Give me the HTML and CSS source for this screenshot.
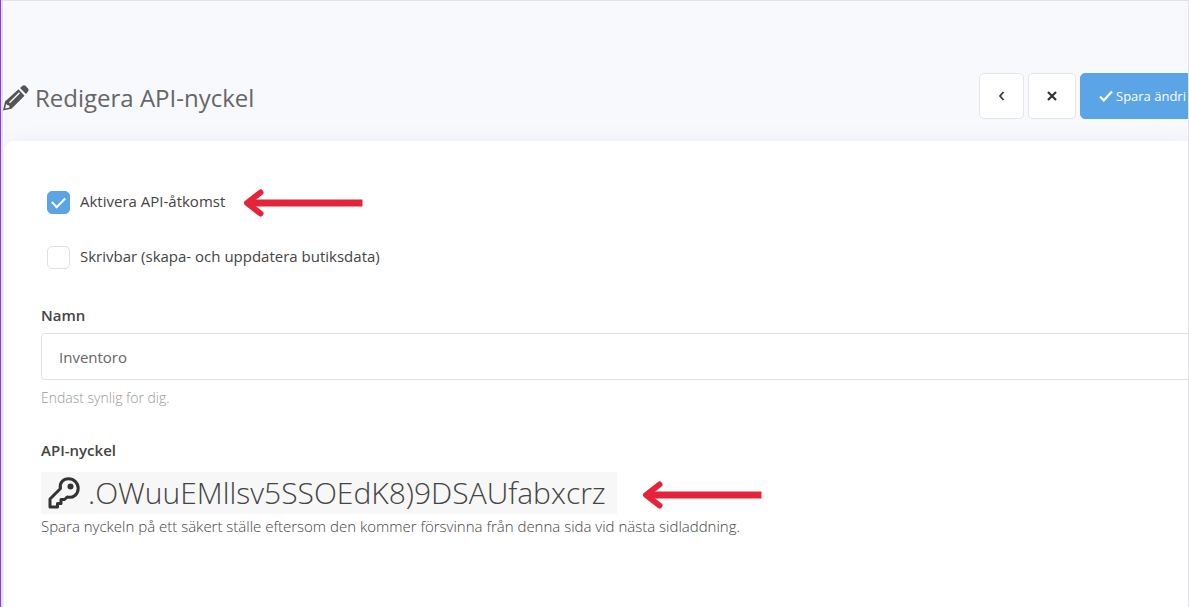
FILE: index.html
```html
<!DOCTYPE html>
<html lang="sv">
<head>
<meta charset="utf-8">
<title>Redigera API-nyckel</title>
<link rel="stylesheet" href="styles.css">
</head>
<body>
<div class="frame">
  <header class="page-header">
    <h1 class="title">
      <svg class="title-icon" viewBox="0 0 26 26" aria-hidden="true">
        <path fill="#555" fill-rule="evenodd" d="M0 25.5 2 16.5 15.5 4.2 21.5 10.700 8.500 23.700ZM2.200 23.600 6.500 22.600 6.200 20.500 4 20 3.200 18.500ZM6 17.200 7 18.200 17 8.200 16 7.200Z"/>
        <path fill="#555" d="m17 3 2.500-2.200q1.500-1.200 3 0L25 3.500q1.200 1.500 0 3L23 9Z"/>
      </svg>
      <span>Redigera API-nyckel</span>
    </h1>
    <div class="actions">
      <button class="btn btn-back" type="button" aria-label="Tillbaka">
        <svg class="btn-icon" viewBox="0 0 12 12" aria-hidden="true"><path d="M7.500 2 4 6l3.500 4" fill="none" stroke="#333" stroke-width="1.700"/></svg>
      </button>
      <button class="btn btn-close" type="button" aria-label="Stäng">
        <svg class="btn-icon" viewBox="0 0 12 12" aria-hidden="true"><path d="m2 2 8 8M10 2l-8 8" fill="none" stroke="#333" stroke-width="2.200"/></svg>
      </button>
      <button class="btn btn-save" type="button">
        <svg class="save-icon" viewBox="0 0 14 12" aria-hidden="true"><path d="m1 6.500 3.800 3.800L13 1.500" fill="none" stroke="#fff" stroke-width="2.200"/></svg>
        <span>Spara ändri</span>
      </button>
    </div>
  </header>
  <main class="card">
    <div class="check-row">
      <input class="check" type="checkbox" id="active" checked>
      <label class="check-label" for="active">Aktivera API-åtkomst</label>
      <svg class="arrow" viewBox="0 0 120 28" aria-hidden="true"><path d="M5 14h114.500" fill="none" stroke="#e5243b" stroke-width="7"/><path d="M17.500 3.500 4 14l13.500 10.500" fill="none" stroke="#e5243b" stroke-width="6" stroke-linecap="round" stroke-linejoin="round"/></svg>
    </div>
    <div class="check-row">
      <input class="check" type="checkbox" id="writable">
      <label class="check-label" for="writable">Skrivbar (skapa- och uppdatera butiksdata)</label>
    </div>
    <div class="field">
      <label class="field-label" for="name">Namn</label>
      <input class="text-input" type="text" id="name" value="Inventoro">
      <p class="hint">Endast synlig for dig.</p>
    </div>
    <section class="key-section">
      <h2 class="field-label">API-nyckel</h2>
      <div class="key-row">
        <div class="key">
          <svg class="key-icon" viewBox="0 0 32 32" aria-hidden="true">
            <path d="M2 30v-8l10.500-10.500C11 6 15.500 1.800 20.500 1.800c5.500 0 9.700 4.200 9.700 9.500 0 6-5 10.200-11 8.700L16.500 22.500H13v4H9.500V30Z" fill="none" stroke="#333" stroke-width="3" stroke-linejoin="round"/>
            <circle cx="22.500" cy="9.500" r="3" fill="#333"/>
          </svg>
          <code class="key-text">.OWuuEMllsv5SSOEdK8)9DSAUfabxcrz</code>
        </div>
        <svg class="arrow" viewBox="0 0 120 28" aria-hidden="true"><path d="M5 14h114.500" fill="none" stroke="#e5243b" stroke-width="7"/><path d="M17.500 3.500 4 14l13.500 10.500" fill="none" stroke="#e5243b" stroke-width="6" stroke-linecap="round" stroke-linejoin="round"/></svg>
      </div>
      <p class="key-note">Spara nyckeln på ett säkert ställe eftersom den kommer försvinna från denna sida vid nästa sidladdning.</p>
    </section>
  </main>
</div>
</body>
</html>
```
FILE: styles.css
```css
* { box-sizing: border-box; }

body {
  margin: 0;
  background: #f8f9fd;
  border-left: 1px solid #9035ff;
  font-family: "Open Sans", "Noto Sans", sans-serif;
  font-size: 15px;
  line-height: 20px;
  color: #444;
}

.frame {
  display: flex;
  flex-direction: column;
  min-height: 100vh;
  overflow: hidden;
  border: 1px solid #e3e4ea;
  border-bottom: 0;
  border-left-width: 2px;
}

.page-header {
  display: flex;
  align-items: center;
  justify-content: space-between;
  margin-right: -12px;
  padding-top: 72px;
  padding-bottom: 22px;
}

.title {
  display: flex;
  align-items: center;
  gap: 6px;
  margin: 0;
  padding-top: 4px;
  font-size: 24px;
  font-weight: 400;
  line-height: 32px;
  color: #666;
}

.title-icon { width: 26px; height: 26px; }

.actions { display: flex; gap: 4px; }

.btn {
  display: flex;
  align-items: center;
  justify-content: center;
  height: 46px;
  padding: 0;
  border: 1px solid #e5e6e9;
  border-radius: 5px;
  background: #fff;
  font-family: inherit;
  font-size: 13px;
}

.btn-back { width: 45px; }
.btn-close { width: 48px; }
.btn-icon { width: 12px; height: 12px; }

.btn-save {
  gap: 3px;
  width: 120px;
  justify-content: flex-start;
  padding-left: 18px;
  border-color: #5ba4e6;
  background: #5ba4e6;
  color: #fff;
  white-space: nowrap;
}

.save-icon { width: 14px; height: 12px; }

.card {
  flex: 1;
  margin-left: 1px;
  padding: 47px 0 48px 37px;
  border-top-left-radius: 9px;
  background: #fff;
  box-shadow: 0 0 20px rgba(40, 50, 80, 0.06);
}

.check-row {
  display: flex;
  align-items: center;
  gap: 10px;
  height: 28px;
  margin-bottom: 27px;
  padding-left: 6px;
}

.check {
  appearance: none;
  display: grid;
  place-items: center;
  width: 23px;
  height: 23px;
  margin: 0;
  border: 1px solid #dedfe1;
  border-radius: 5px;
  background: #fff;
}

.check:checked {
  border-color: #5ba4e6;
  background: #5ba4e6;
}

.check:checked::after {
  content: "";
  width: 11px;
  height: 6px;
  margin-bottom: 3px;
  border: solid #fff;
  border-width: 0 0 2px 2px;
  transform: rotate(-45deg);
}

.check-label { padding-bottom: 2px; }

.arrow {
  flex: none;
  width: 120px;
  height: 28px;
  margin-top: 4px;
}

.check-row .arrow { margin: 2px 0 0 8px; }

.field-label {
  display: block;
  margin: 0;
  font-size: 15px;
  font-weight: 600;
  line-height: 20px;
}

.field { padding-top: 7px; }

.text-input {
  display: block;
  width: calc(100% + 10px);
  height: 47px;
  margin-top: 8px;
  padding: 0 17px;
  border: 1px solid #e0e0e2;
  border-radius: 4px;
  background: #fff;
  font: inherit;
  color: #666;
}

.hint {
  margin: 8px 0 0;
  font-size: 14px;
  font-weight: 300;
  color: #999;
}

.key-section { padding-top: 32px; }

.key-row {
  display: flex;
  align-items: center;
  gap: 25px;
  margin-top: 12px;
}

.key {
  display: flex;
  align-items: center;
  gap: 8px;
  height: 42px;
  padding: 0 11px 0 7px;
  background: #f7f7f7;
}

.key-icon { width: 32px; height: 32px; }

.key-text {
  font-family: inherit;
  font-size: 30px;
  font-weight: 300;
  line-height: 42px;
}

.key-note {
  margin: 2px 0 0;
  font-size: 15px;
  font-weight: 300;
}
```
